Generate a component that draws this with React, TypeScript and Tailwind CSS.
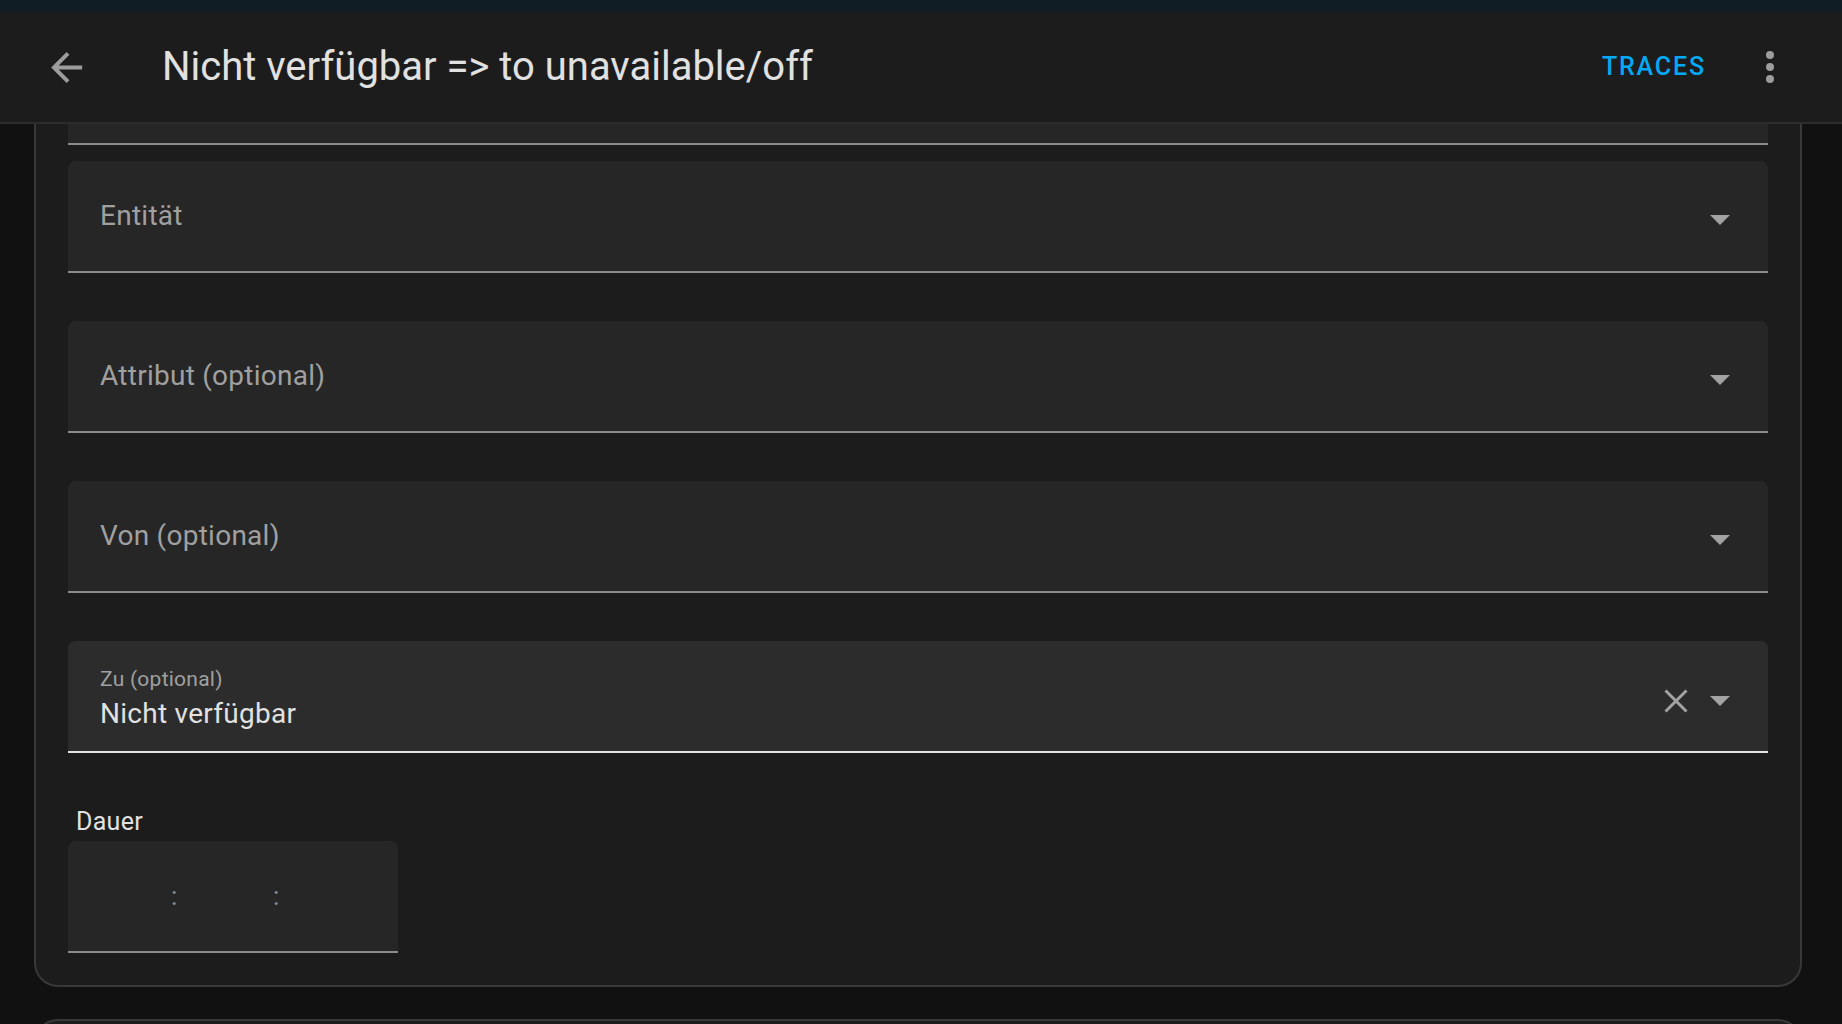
import React from "react";

function Caret({ className = "" }: { className?: string }) {
  return (
    <svg width="20" height="10" viewBox="0 0 20 10" className={className}>
      <polygon points="0,0 20,0 10,10" fill="#a3a3a3" />
    </svg>
  );
}

function SelectField({ label }: { label: string }) {
  return (
    <div className="flex h-[112px] items-center rounded-t-[7px] border-b-2 border-[#8c8c8c] bg-[#262626] pl-[32px] pr-[38px]">
      <div className="flex-1 text-[28px] leading-[32px] tracking-[0.26px] text-[#a0a0a0]">{label}</div>
      <Caret className="mt-[8px]" />
    </div>
  );
}

export default function App() {
  return (
    <div className="flex h-[1024px] w-[1842px] flex-col overflow-hidden bg-[#111111] font-['Roboto',sans-serif]">
      <div className="h-[12px] shrink-0 bg-[#111d24]" />
      <header className="flex h-[112px] shrink-0 items-center border-b-2 border-[#2c2c2c] bg-[#1c1c1c] pl-[43px] pr-[48px]">
        <svg width="47" height="47" viewBox="0 0 24 24" className="shrink-0">
          <path
            d="M20,11V13H8L13.5,18.5L12.08,19.92L4.16,12L12.08,4.08L13.5,5.5L8,11H20Z"
            fill="#9c9c9c"
          />
        </svg>
        <div className="ml-[72px] flex-1 text-[40px] leading-[48px] text-[#e1e1e1]">
          Nicht verfügbar =&gt; to unavailable/off
        </div>
        <div className="text-[25px] font-medium leading-[30px] tracking-[1.85px] text-[#03a9f4]">TRACES</div>
        <svg width="48" height="48" viewBox="0 0 24 24" className="ml-[40px] shrink-0">
          <path
            d="M12,16A2,2 0 0,1 14,18A2,2 0 0,1 12,20A2,2 0 0,1 10,18A2,2 0 0,1 12,16M12,10A2,2 0 0,1 14,12A2,2 0 0,1 12,14A2,2 0 0,1 10,12A2,2 0 0,1 12,10M12,4A2,2 0 0,1 14,6A2,2 0 0,1 12,8A2,2 0 0,1 10,6A2,2 0 0,1 12,4Z"
            fill="#9c9c9c"
          />
        </svg>
      </header>
      <main className="flex-1 pl-[34px] pr-[40px]">
        <div className="rounded-b-[24px] border-2 border-t-0 border-[#383838] bg-[#1c1c1c] px-[32px] pb-[32px]">
          <div className="h-[21px] border-b-2 border-[#8c8c8c] bg-[#262626]" />
          <div className="mt-[16px] flex flex-col gap-[48px]">
            <SelectField label="Entität" />
            <SelectField label="Attribut (optional)" />
            <SelectField label="Von (optional)" />
            <div className="flex h-[112px] items-center rounded-t-[7px] border-b-2 border-[#e3e3e3] bg-[#2c2c2c] pl-[32px] pr-[38px]">
              <div className="flex flex-1 flex-col self-start pt-[26px]">
                <div className="text-[21px] leading-[24px] tracking-[0.25px] text-[#a0a0a0]">Zu (optional)</div>
                <div className="mt-[7px] text-[28px] leading-[32px] tracking-[0.26px] text-[#e1e1e1]">Nicht verfügbar</div>
              </div>
              <svg width="24" height="24" viewBox="0 0 24 24" className="mt-[9px]">
                <path d="M1.5,1.5 L22.5,22.5 M22.5,1.5 L1.5,22.5" stroke="#a3a3a3" strokeWidth="3" />
              </svg>
              <Caret className="ml-[22px] mt-[9px]" />
            </div>
          </div>
          <div className="mt-[54px] pl-[8px] text-[25px] leading-[30px] tracking-[0.3px] text-[#e1e1e1]">Dauer</div>
          <div className="mt-[4px] flex h-[112px] w-[330px] items-center rounded-t-[7px] border-b-2 border-[#8c8c8c] bg-[#262626] text-[26px] leading-[30px] text-[#8c8c8c]">
            <div className="w-[103px]" />
            <div className="w-[6px] text-center">:</div>
            <div className="w-[96px]" />
            <div className="w-[6px] text-center">:</div>
          </div>
        </div>
        <div className="mt-[32px] h-[60px] rounded-t-[24px] border-2 border-b-0 border-[#383838] bg-[#1c1c1c]" />
      </main>
    </div>
  );
}
